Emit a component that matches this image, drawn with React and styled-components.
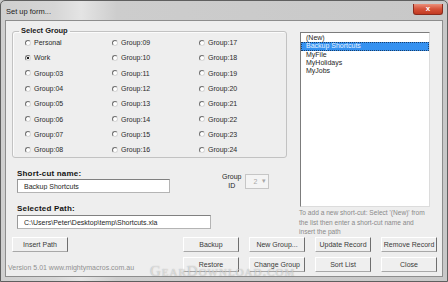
import React from 'react';
import styled, { createGlobalStyle } from 'styled-components';

const GlobalStyle = createGlobalStyle`
  html, body { margin: 0; padding: 0; }
  body {
    width: 448px;
    height: 282px;
    overflow: hidden;
    background: #c9c9c9;
    font-family: "Liberation Sans", Arial, sans-serif;
  }
`;

// fenetre principale, cadre gris style Aero
const Window = styled.div`
  position: relative;
  box-sizing: border-box;
  width: 448px;
  height: 282px;
  display: flex;
  flex-direction: column;
  padding: 0 4px 4px 4px;
  border: 1px solid #5f5f5f;
  border-radius: 5px 5px 0 0;
  background: linear-gradient(90deg, #cfcfcf 0%, #d6d6d6 12%, #e4e4e4 18%, #cdcdcd 26%, #c8c8c8 100%);
`;

const TitleBar = styled.div`
  height: 19px;
  display: flex;
  align-items: flex-start;
  justify-content: space-between;
`;

const Title = styled.span`
  margin: 6px 0 0 1px;
  font-size: 7.5px;
  line-height: 10px;
  color: #1e1e1e;
`;

const CloseButton = styled.div`
  box-sizing: border-box;
  width: 30px;
  height: 11px;
  margin-top: 3px;
  border: 1px solid #8a2b1d;
  border-top: none;
  border-radius: 0 0 3px 3px;
  background: linear-gradient(#eb8f7a, #d55239 50%, #c23a22);
  display: flex;
  align-items: center;
  justify-content: center;
  color: #fff;
  font-size: 8px;
  font-weight: bold;
  line-height: 1;
`;

const Client = styled.div`
  flex: 1;
  box-sizing: border-box;
  display: flex;
  flex-direction: column;
  padding: 5px 5px 4px 6px;
  border: 1px solid #8d8d8d;
  background: #eeeeee;
`;

const Top = styled.div`
  display: flex;
  gap: 13px;
`;

const LeftCol = styled.div`
  width: 275px;
  display: flex;
  flex-direction: column;
`;

const Frame = styled.fieldset`
  margin: 0;
  padding: 0;
  min-width: 0;
  border: 1px solid #c2c2c2;
  border-radius: 3px;
  box-shadow: inset 1px 1px 0 #fbfbfb;
`;

const Legend = styled.legend`
  margin-left: 6px;
  padding: 0 2px;
  font-size: 7.5px;
  line-height: 10px;
  font-weight: bold;
  color: #1a1a1a;
`;

const RadioGrid = styled.div`
  display: grid;
  grid-template-columns: repeat(3, 87px);
  grid-template-rows: repeat(8, 15.3px);
  grid-auto-flow: column;
  margin-top: -1px;
  padding-left: 12px;
`;

const RadioRow = styled.label`
  display: flex;
  align-items: center;
  gap: 3px;
  font-size: 7px;
  color: #2a2a2a;
`;

const RadioDot = styled.span`
  box-sizing: border-box;
  width: 6px;
  height: 6px;
  border-radius: 50%;
  border: 1px solid;
  border-color: #707070 #d8d8d8 #d8d8d8 #707070;
  background: ${p => (p.checked ? 'radial-gradient(circle, #1e1e1e 0 1.3px, #fff 1.6px)' : '#fff')};
`;

const FieldLabel = styled.div`
  font-size: 8px;
  font-weight: bold;
  letter-spacing: 0.2px;
  line-height: 10px;
  color: #141414;
`;

const TextBox = styled.input`
  box-sizing: border-box;
  display: block;
  width: ${p => p.w}px;
  height: 14px;
  margin: 0;
  padding: 0 6px;
  border: 1px solid #b4b4b4;
  border-top-color: #808080;
  border-left-color: #9a9a9a;
  background: #fff;
  font-family: "Liberation Sans", Arial, sans-serif;
  font-size: 7px;
  color: #1e1e1e;
  outline: none;
`;

const NameRow = styled.div`
  display: flex;
  align-items: flex-end;
  margin-top: 11px;
  padding-left: 5px;
`;

const GroupId = styled.div`
  display: flex;
  align-items: center;
  gap: 4px;
  margin: 0 0 3px 52px;
`;

const GroupIdLabel = styled.div`
  font-size: 7px;
  line-height: 9px;
  text-align: center;
  color: #1e1e1e;
`;

const DisabledSelect = styled.div`
  box-sizing: border-box;
  width: 24px;
  height: 15px;
  display: flex;
  align-items: center;
  justify-content: space-between;
  padding: 0 2px 0 7px;
  border: 1px solid #c6c6c6;
  background: #f4f4f4;
  font-size: 7px;
  color: #a8a8a8;
`;

const PathBlock = styled.div`
  margin-top: 11px;
  padding-left: 5px;
  display: flex;
  flex-direction: column;
  gap: 1px;
`;

const RightCol = styled.div`
  width: 130px;
  margin-top: 6px;
  display: flex;
  flex-direction: column;
`;

const ListBox = styled.ul`
  box-sizing: border-box;
  height: 175px;
  margin: 0;
  padding: 1px 0 0;
  list-style: none;
  border: 1px solid;
  border-color: #7c7c7c #dcdcdc #dcdcdc #7c7c7c;
  background: #fff;
`;

const ListItem = styled.li`
  box-sizing: border-box;
  height: 8.3px;
  padding-left: 5px;
  font-size: 7px;
  line-height: 8.3px;
  color: ${p => (p.selected ? '#e8f3ff' : '#1e1e1e')};
  background: ${p => (p.selected ? '#3591f0' : 'transparent')};
  outline: ${p => (p.selected ? '1px dotted #1a3f6a' : 'none')};
  outline-offset: -1px;
`;

const Hint = styled.p`
  margin: 1px 0 0 -1px;
  font-size: 6.6px;
  line-height: 9.5px;
  color: #8a8a8a;
  white-space: nowrap;
`;

const ButtonGrid = styled.div`
  display: grid;
  grid-template-columns: 56px 1fr repeat(4, 56px);
  column-gap: 10px;
  row-gap: 5px;
  margin-top: 0;
`;

const Button = styled.div`
  box-sizing: border-box;
  height: 15px;
  display: flex;
  align-items: center;
  justify-content: center;
  grid-column: ${p => p.col};
  border: 1px solid;
  border-color: #ffffff #6e6e6e #a8a8a8 #ffffff;
  background: #efefef;
  font-size: 7px;
  color: #3a3a3a;
  white-space: nowrap;
`;

const Version = styled.div`
  grid-column: 1 / 3;
  align-self: end;
  margin: 0 0 0 -4px;
  font-size: 7px;
  line-height: 9px;
  color: #909090;
`;

const Watermark = styled.div`
  position: absolute;
  left: 149px;
  top: 262px;
  font-family: "Liberation Serif", "Times New Roman", serif;
  font-size: 15px;
  font-variant: small-caps;
  letter-spacing: 1px;
  color: rgba(255, 255, 255, 0.55);
  text-shadow: 0 0 1px rgba(90, 90, 90, 0.55);
  pointer-events: none;
`;

const groups = [
  'Personal', 'Work',
  ...Array.from({ length: 22 }, (_, i) => `Group:${String(i + 3).padStart(2, '0')}`),
];

const shortcuts = ['(New)', 'Backup Shortcuts', 'MyFile', 'MyHolidays', 'MyJobs'];

export default function App() {
  return (
    <>
      <GlobalStyle />
      <Window>
        <TitleBar>
          <Title>Set up form...</Title>
          <CloseButton>x</CloseButton>
        </TitleBar>
        <Client>
          <Top>
            <LeftCol>
              <Frame>
                <Legend>Select Group</Legend>
                <RadioGrid>
                  {groups.map(g => (
                    <RadioRow key={g}>
                      <RadioDot checked={g === 'Work'} />
                      {g}
                    </RadioRow>
                  ))}
                </RadioGrid>
              </Frame>
              <NameRow>
                <div>
                  <FieldLabel>Short-cut name:</FieldLabel>
                  <TextBox w={153} value="Backup Shortcuts" readOnly />
                </div>
                <GroupId>
                  <GroupIdLabel>Group<br />ID</GroupIdLabel>
                  <DisabledSelect>
                    <span>2</span>
                    <span>▾</span>
                  </DisabledSelect>
                </GroupId>
              </NameRow>
              <PathBlock>
                <FieldLabel>Selected Path:</FieldLabel>
                <TextBox w={194} value="C:\Users\Peter\Desktop\temp\Shortcuts.xla" readOnly />
              </PathBlock>
            </LeftCol>
            <RightCol>
              <ListBox>
                {shortcuts.map(s => (
                  <ListItem key={s} selected={s === 'Backup Shortcuts'}>{s}</ListItem>
                ))}
              </ListBox>
              <Hint>
                To add a new short-cut: Select '(New)' from<br />
                the list then enter a short-cut name and<br />
                insert the path
              </Hint>
            </RightCol>
          </Top>
          <ButtonGrid>
            <Button col={1}>Insert Path</Button>
            <Button col={3}>Backup</Button>
            <Button col={4}>New Group...</Button>
            <Button col={5}>Update Record</Button>
            <Button col={6}>Remove Record</Button>
            <Version>Version 5.01 www.mightymacros.com.au</Version>
            <Button col={3}>Restore</Button>
            <Button col={4}>Change Group</Button>
            <Button col={5}>Sort List</Button>
            <Button col={6}>Close</Button>
          </ButtonGrid>
        </Client>
        <Watermark>GearDownload.com</Watermark>
      </Window>
    </>
  );
}
